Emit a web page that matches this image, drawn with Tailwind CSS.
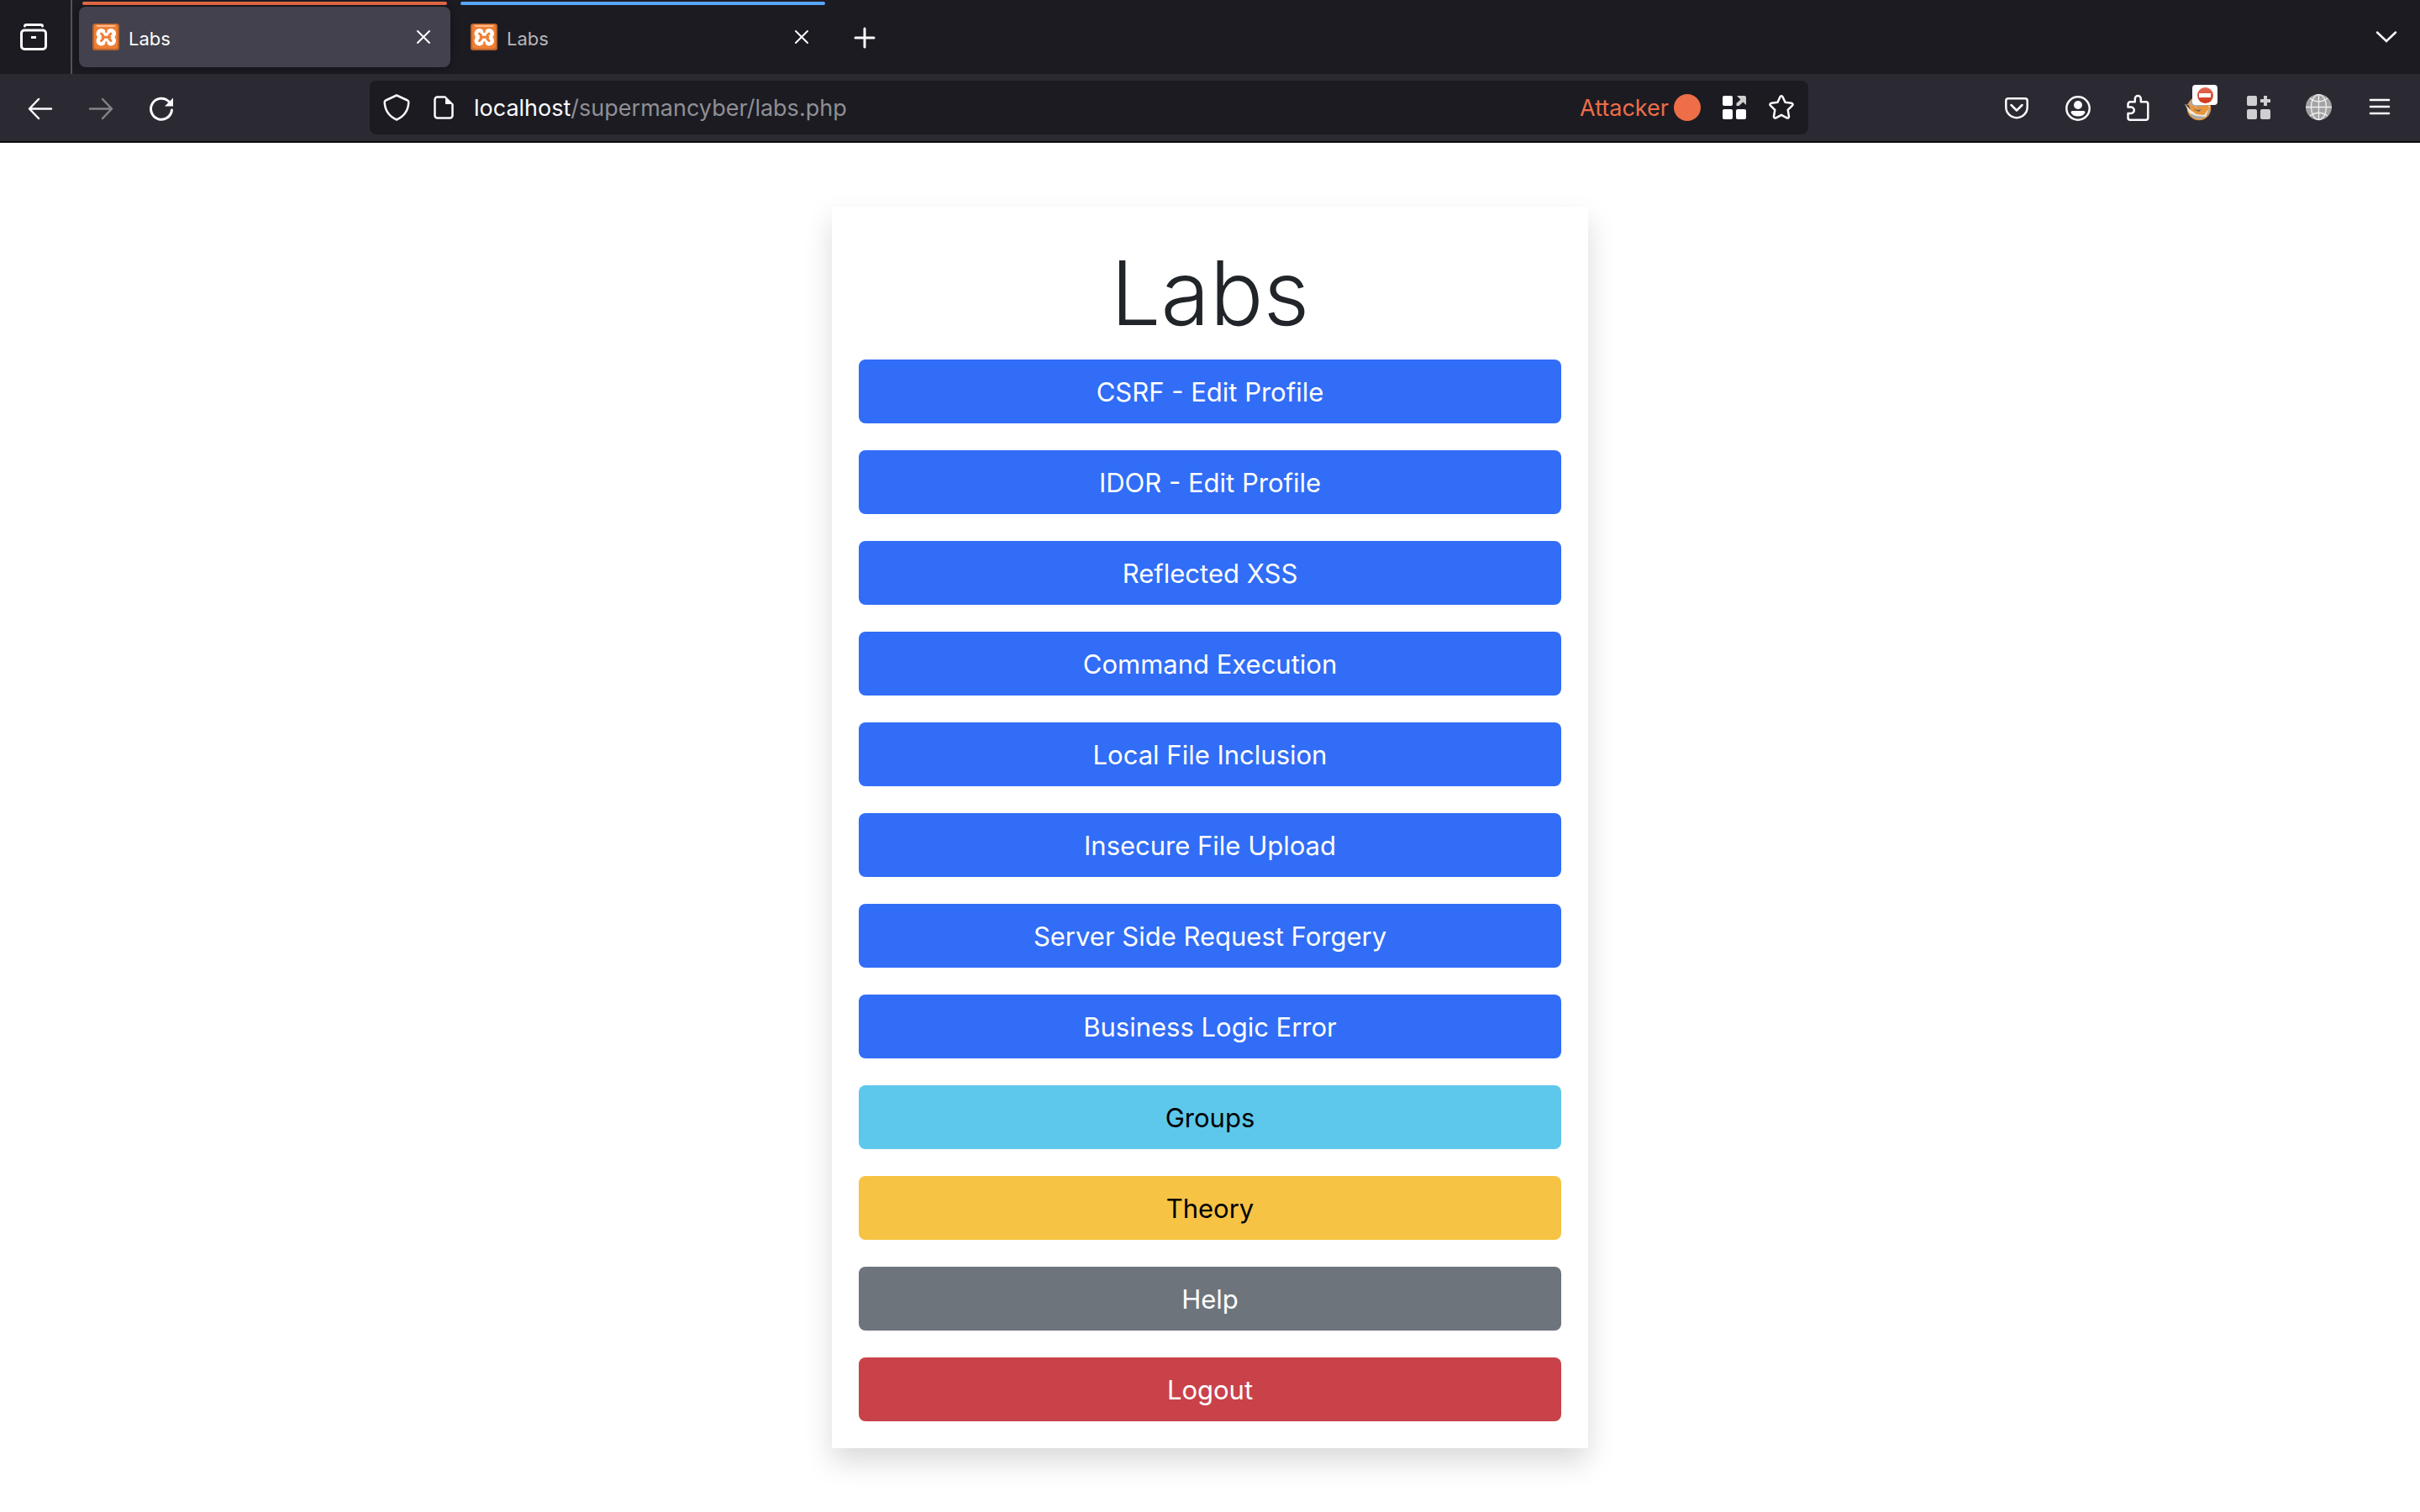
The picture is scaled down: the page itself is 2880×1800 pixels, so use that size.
<!DOCTYPE html>
<html lang="en">
<head>
<meta charset="utf-8">
<title>Labs</title>
<script src="https://cdn.jsdelivr.net/npm/@tailwindcss/browser@4"></script>
</head>
<body class="min-h-screen bg-white font-[Inter,sans-serif]">
<svg class="hidden">
  <symbol id="favicon" viewBox="0 0 32 32">
    <rect width="32" height="32" rx="3" fill="#b9642c"/>
    <rect x="2" y="1" width="28" height="29" rx="3" fill="#ef7f35"/>
    <path d="M4 2h24l-2 2H6z" fill="#f6bd95"/>
    <g fill="#fff"><circle cx="10.500" cy="12" r="6"/><circle cx="22" cy="12" r="6"/><circle cx="10.500" cy="20.500" r="6"/><circle cx="22" cy="20.500" r="6"/><path d="M10 10h12v13H10z"/></g>
    <path d="M14.800 4.500h3.200l-.5 6.500h-2.200zM14.800 28h3.200l-.5-6.500h-2.200z" fill="#ef7f35"/>
    <path d="M10.500 12l2 2v4.500l-2 2M22 12l-2 2v4.500l2 2M12 16.200h9" fill="none" stroke="#ef7f35" stroke-width="3" stroke-linecap="round"/>
  </symbol>
  <symbol id="close" viewBox="0 0 20 20">
    <path d="M3 3l14 14M17 3L3 17" fill="none" stroke="#fbfbfe" stroke-width="2" stroke-linecap="round"/>
  </symbol>
</svg>

<header>
  <div class="flex h-[88px] items-stretch bg-[#1c1b22]">
    <button class="flex w-[86px] items-center border-r-2 border-[#52525e] pl-[24px]" aria-label="Recent browsing">
      <svg class="size-[32px]" viewBox="0 0 32 32" fill="none" stroke="#fbfbfe" stroke-width="3" stroke-linecap="round"><path d="M5.500 3C5.500 1.800 6.500 1.500 7.500 1.500h17c1 0 2 .3 2 1.500"/><rect x="1.500" y="8" width="29" height="22.500" rx="3.500"/><path d="M13 16.500h6" stroke-linecap="butt"/></svg>
    </button>
    <div class="flex gap-2 pl-2" role="tablist">
      <div class="flex w-[442px] flex-col pt-[2px]">
        <div class="mx-1 h-1 rounded-full bg-[#ee6e48]"></div>
        <div class="mt-[2px] flex h-[72px] items-center rounded-lg bg-[#42414d] px-4 shadow-[0_0_8px_rgba(0,0,0,0.4)]" role="tab" aria-selected="true">
          <svg class="size-[32px]"><use href="#favicon"/></svg>
          <span class="ml-[11px] flex-1 pt-1 text-[22px] leading-[28px] text-[#fbfbfe]">Labs</span>
          <button class="mr-[6px]" aria-label="Close tab"><svg class="size-[20px]"><use href="#close"/></svg></button>
        </div>
      </div>
      <div class="flex w-[442px] flex-col pt-[2px]">
        <div class="mx-1 h-1 rounded-full bg-[#58a6f8]"></div>
        <div class="mt-[2px] flex h-[72px] items-center rounded-lg px-4" role="tab" aria-selected="false">
          <svg class="size-[32px]"><use href="#favicon"/></svg>
          <span class="ml-[11px] flex-1 pt-1 text-[22px] leading-[28px] text-[#b5b5ba]">Labs</span>
          <button class="mr-[6px]" aria-label="Close tab"><svg class="size-[20px]"><use href="#close"/></svg></button>
        </div>
      </div>
    </div>
    <button class="ml-[27px]" aria-label="New tab">
      <svg class="size-[32px]" viewBox="0 0 32 32"><path d="M16 6v22M5 17h22" stroke="#fbfbfe" stroke-width="3" stroke-linecap="round"/></svg>
    </button>
    <button class="mr-[24px] ml-auto" aria-label="List all tabs">
      <svg class="size-[32px]" viewBox="0 0 32 32"><path d="M5 10.500l11 10.500 11-10.500" fill="none" stroke="#fbfbfe" stroke-width="2.500" stroke-linecap="round"/></svg>
    </button>
  </div>

  <nav class="flex h-[82px] items-center border-b-2 border-[#0c0c0d] bg-[#2b2a33]">
    <div class="flex gap-[40px] pr-[20px] pl-[32px]">
      <button aria-label="Back"><svg class="size-[32px]" viewBox="0 0 32 32" fill="none" stroke="#fbfbfe" stroke-width="2.500" stroke-linecap="round" stroke-linejoin="round"><path d="M29 17.500H3M14 6L3 17.500 14 29"/></svg></button>
      <button aria-label="Forward" disabled><svg class="size-[32px]" viewBox="0 0 32 32" fill="none" stroke="#85848b" stroke-width="2.500" stroke-linecap="round" stroke-linejoin="round"><path d="M3 17.500h26M18 6l11 11.500L18 29"/></svg></button>
      <button aria-label="Reload"><svg class="size-[32px]" viewBox="0 0 32 32" fill="none" stroke="#fbfbfe" stroke-width="3" stroke-linecap="round"><path d="M28.500 19A12.500 12.500 0 1 1 25 9"/><path d="M30 4.500v10H20z" fill="#fbfbfe" stroke="none"/></svg></button>
    </div>
    <div class="flex-1"></div>
    <div class="flex h-[64px] basis-[1712px] items-center rounded-lg bg-[#1c1b22] pr-4 pl-4">
      <button aria-label="Tracking protection"><svg class="size-[32px]" viewBox="0 0 32 32"><path d="M16 1.500L29 7.500c1 .5 1.300 1 1.300 2C30 18 26 26 16 30.500 6 26 2 18 1.700 9.500c0-1 .3-1.500 1.300-2z" fill="none" stroke="#fbfbfe" stroke-width="2.500" stroke-linejoin="round"/></svg></button>
      <button class="ml-6" aria-label="Site information"><svg class="size-[32px]" viewBox="0 0 32 32"><path d="M18 3.500H8.500a3 3 0 0 0-3 3v19a3 3 0 0 0 3 3h15a3 3 0 0 0 3-3V12" fill="none" stroke="#fbfbfe" stroke-width="2.500"/><path d="M18 2.200L27.800 12H18z" fill="#fbfbfe"/></svg></button>
      <div class="ml-5 flex-1 pt-[2px] text-[27px] leading-[34px] whitespace-nowrap text-[#8f8f95]" role="textbox" contenteditable="true" spellcheck="false" aria-label="Address"><span class="text-[#fbfbfe]">localhost</span>/supermancyber/labs.php</div>
      <span class="pt-[2px] text-[27px] leading-[34px] text-[#ee6e48]">Attacker</span>
      <span class="ml-[6px] size-[32px] rounded-full bg-[#ee6e48]"></span>
      <button class="ml-6" aria-label="Containers"><svg class="size-[32px]" viewBox="0 0 32 32" fill="#fff"><rect x="2" y="2" width="12" height="12" rx="2"/><rect x="2" y="18" width="12" height="12" rx="2"/><rect x="18" y="18" width="12" height="12" rx="2"/><path d="M19 2h9a2 2 0 0 1 2 2v9l-3.500-3.500-5 4.500h-3v-3l5-4.500z" fill="#cfcfd1"/></svg></button>
      <button class="ml-6" aria-label="Bookmark"><svg class="size-[32px]" viewBox="0 0 32 32"><path d="M14.500 3.200c.6-1.300 2.400-1.300 3 0l3 6.500 7.500 1c1.500.2 2.100 2 1 3l-5.300 5.200 1.300 7.600c.2 1.500-1.200 2.500-2.500 1.800L16 24.800l-6.500 3.500c-1.300.7-2.700-.3-2.500-1.800l1.300-7.600L3 13.700c-1.100-1-.5-2.800 1-3l7.500-1z" fill="none" stroke="#fbfbfe" stroke-width="2.500" stroke-linejoin="round"/></svg></button>
    </div>
    <div class="flex-1"></div>
    <div class="flex gap-[40px] pr-[32px] pl-[20px]">
      <button aria-label="Save to Pocket"><svg class="size-[32px]" viewBox="0 0 32 32" fill="none" stroke="#fbfbfe" stroke-width="2.500" stroke-linecap="round" stroke-linejoin="round"><path d="M6 5.300h20a2.700 2.700 0 0 1 2.700 2.700v7.500a12.700 12.700 0 0 1-25.400 0V8A2.700 2.700 0 0 1 6 5.300z"/><path d="M9.500 13l6.500 6.500 6.500-6.500"/></svg></button>
      <button aria-label="Account"><svg class="size-[32px]" viewBox="0 0 32 32" fill="#fbfbfe"><circle cx="17" cy="17" r="13.700" fill="none" stroke="#fbfbfe" stroke-width="2.500"/><circle cx="17" cy="13" r="5"/><path d="M10 20h14a2 2 0 0 1 1.500 2c-1.500 3-4.500 4.500-8.500 4.500S10 25 8.500 22A2 2 0 0 1 10 20z"/></svg></button>
      <button aria-label="Extensions"><svg class="size-[32px]" viewBox="0 0 32 32"><path d="M4.500 15.500V12a2.700 2.700 0 0 1 2.700-2.700h5.600V5.500a3.500 3.500 0 0 1 7 0v3.800h6a2.500 2.500 0 0 1 2.500 2.500v16.400a2.500 2.500 0 0 1-2.500 2.500H7a2.500 2.500 0 0 1-2.500-2.500V23H8a3.700 3.700 0 0 0 0-7.500z" fill="none" stroke="#fbfbfe" stroke-width="2.500" stroke-linejoin="round"/></svg></button>
      <button class="relative" aria-label="FoxyProxy">
        <svg class="size-[32px]" viewBox="0 0 32 32"><circle cx="17" cy="17" r="13.500" fill="#a9abb0" stroke="#e8953c" stroke-width="1.500"/><path d="M0 12l11 2 9 2 10-2-5 13-11-1-8-3z" fill="#f3e9da"/><path d="M5 12l9 3 14-2 1 4-6 8-9-1-7-5z" fill="#e8953c"/><path d="M0 12l5 1 2 6z" fill="#5b4a3c"/><path d="M10 18l6 1 4-1-3 3z" fill="#5d6068"/></svg>
        <span class="absolute -top-[11px] left-[9px] flex h-[24px] w-[30px] items-center justify-center rounded bg-white"><span class="flex size-[19px] items-center justify-center rounded-full bg-linear-to-b from-[#e46a55] to-[#cf3016]"><span class="h-[5px] w-[14px] bg-white"></span></span></span>
      </button>
      <button aria-label="Container tabs"><svg class="size-[32px]" viewBox="0 0 32 32" fill="#cfcfd1"><rect x="2" y="2" width="12" height="12" rx="2"/><rect x="2" y="18" width="12" height="12" rx="2"/><rect x="18" y="18" width="12" height="12" rx="2"/><path d="M22 2h4v4h4v4h-4v4h-4v-4h-4V6h4z"/></svg></button>
      <button aria-label="Language"><svg class="size-[32px]" viewBox="0 0 32 32"><circle cx="15.500" cy="15.500" r="15.500" fill="#a3a3a3"/><g fill="none" stroke="#f0f0f0" stroke-width="1.300"><path d="M15.500 0v31M0 15.500h31M5 5c6.500 5 14.500 5 21 0M5 26c6.500-5 14.500-5 21 0"/><ellipse cx="15.500" cy="15.500" rx="9" ry="15"/></g></svg></button>
      <button aria-label="Open menu"><svg class="size-[32px]" viewBox="0 0 32 32"><path d="M5 7h22M5 15h22M5 23h22" stroke="#fbfbfe" stroke-width="2.500" stroke-linecap="round"/></svg></button>
    </div>
  </nav>
</header>

<main class="px-6 pt-[76px] pb-[76px]">
  <section class="mx-auto flex max-w-[900px] flex-col gap-8 p-8 text-center text-[31px] leading-[48px] text-white shadow-[0_16px_32px_rgba(0,0,0,0.15)]">
    <h1 class="-mb-4 pt-2 text-[106px] leading-[126px] font-[350] text-[#212529]">Labs</h1>
    <a href="#" class="rounded-lg bg-[#316df6] pt-[15px] pb-[13px]">CSRF - Edit Profile</a>
    <a href="#" class="rounded-lg bg-[#316df6] pt-[15px] pb-[13px]">IDOR - Edit Profile</a>
    <a href="#" class="rounded-lg bg-[#316df6] pt-[15px] pb-[13px]">Reflected XSS</a>
    <a href="#" class="rounded-lg bg-[#316df6] pt-[15px] pb-[13px]">Command Execution</a>
    <a href="#" class="rounded-lg bg-[#316df6] pt-[15px] pb-[13px]">Local File Inclusion</a>
    <a href="#" class="rounded-lg bg-[#316df6] pt-[15px] pb-[13px]">Insecure File Upload</a>
    <a href="#" class="rounded-lg bg-[#316df6] pt-[15px] pb-[13px]">Server Side Request Forgery</a>
    <a href="#" class="rounded-lg bg-[#316df6] pt-[15px] pb-[13px]">Business Logic Error</a>
    <a href="#" class="rounded-lg bg-[#5dc8eb] pt-[15px] pb-[13px] text-black">Groups</a>
    <a href="#" class="rounded-lg bg-[#f6c344] pt-[15px] pb-[13px] text-black">Theory</a>
    <a href="#" class="rounded-lg bg-[#6d747c] pt-[15px] pb-[13px]">Help</a>
    <a href="#" class="rounded-lg bg-[#c94249] pt-[15px] pb-[13px]">Logout</a>
  </section>
</main>
</body>
</html>
